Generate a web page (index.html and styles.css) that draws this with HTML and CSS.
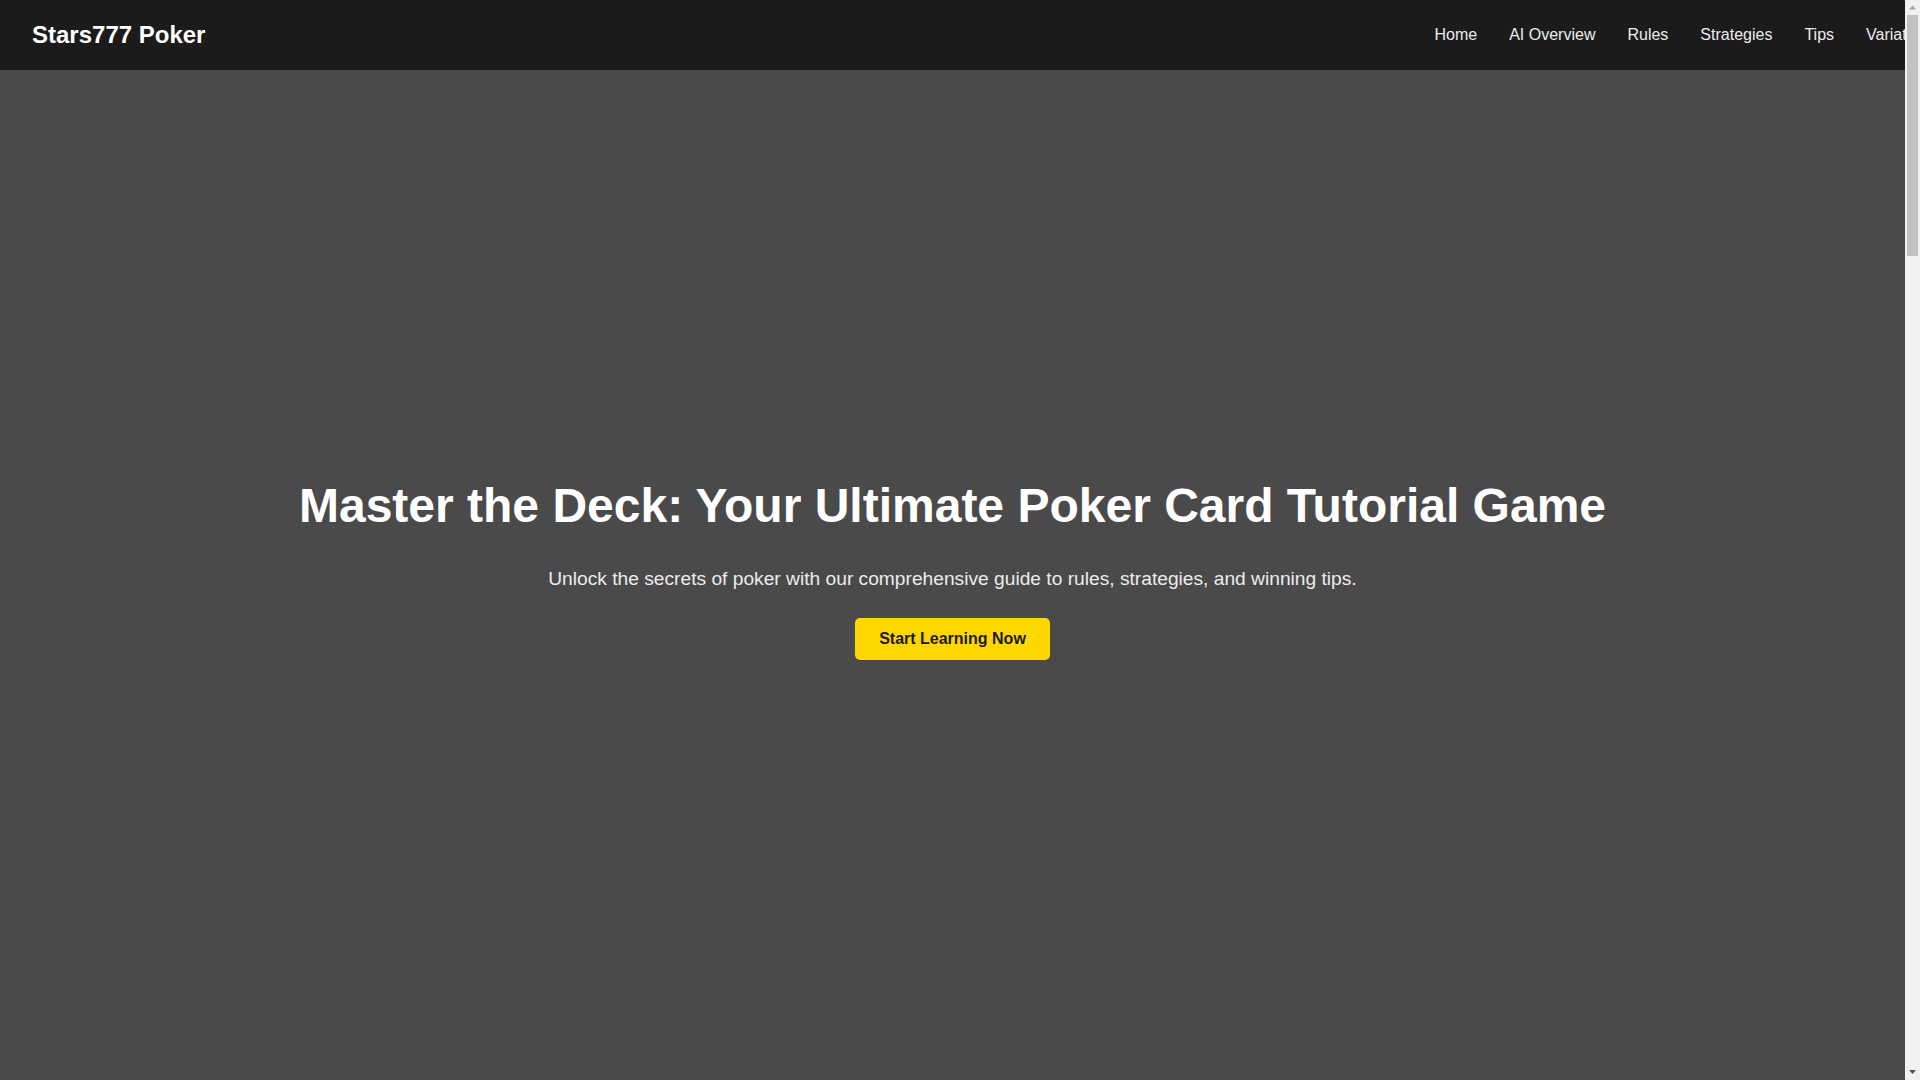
FILE: index.html
```html
<!DOCTYPE html>
<html lang="en">
<head>
<meta charset="utf-8">
<title>Stars777 Poker - Master the Deck</title>
<link rel="stylesheet" href="styles.css">
</head>
<body>
<header class="site-header">
  <a class="logo" href="#">Stars777 Poker</a>
  <nav class="main-nav">
    <ul class="nav-list">
      <li><a href="#home">Home</a></li>
      <li><a href="#overview">AI Overview</a></li>
      <li><a href="#rules">Rules</a></li>
      <li><a href="#strategies">Strategies</a></li>
      <li><a href="#tips">Tips</a></li>
      <li><a href="#variations">Variations</a></li>
    </ul>
  </nav>
</header>

<main>
  <section class="hero" id="home">
    <div class="hero-content">
      <h1 class="hero-title">Master the Deck: Your Ultimate Poker Card Tutorial Game</h1>
      <p class="hero-sub">Unlock the secrets of poker with our comprehensive guide to rules, strategies, and winning tips.</p>
      <a class="btn-primary" href="#rules">Start Learning Now</a>
    </div>
  </section>

  <section class="section" id="overview">
    <h2 class="section-title">AI Overview</h2>
    <p class="section-text">Poker is a family of card games that combines skill, strategy and a little luck. Players wager on the strength of their hands, and the best hand or the last player standing wins the pot.</p>
  </section>

  <section class="section alt" id="rules">
    <h2 class="section-title">Rules</h2>
    <p class="section-text">Learn how hands are ranked, how betting rounds work, and how the blinds and the dealer button move around the table.</p>
  </section>

  <section class="section" id="strategies">
    <h2 class="section-title">Strategies</h2>
    <p class="section-text">Position, starting hand selection, pot odds and reading opponents are the pillars of a winning game.</p>
  </section>

  <section class="section alt" id="tips">
    <h2 class="section-title">Tips</h2>
    <p class="section-text">Manage your bankroll, stay patient, and review your hands after each session.</p>
  </section>

  <section class="section" id="variations">
    <h2 class="section-title">Variations</h2>
    <p class="section-text">Texas Hold'em, Omaha, Seven-Card Stud and more: discover the games played around the world.</p>
  </section>
</main>

<footer class="site-footer">
  <p>&copy; 2024 Stars777 Poker. All rights reserved.</p>
</footer>
</body>
</html>
```

FILE: styles.css
```css
html {
  height: 100%;
  overflow: hidden;
  /* scrollbar gutter: up arrow, down arrow, thumb, track */
  background:
    url("data:image/svg+xml;utf8,<svg xmlns='http://www.w3.org/2000/svg' width='15' height='15'><polygon points='4,9.5 7.5,5.5 11,9.5' fill='%23a3a3a3'/></svg>") right top / 15px 15px no-repeat,
    url("data:image/svg+xml;utf8,<svg xmlns='http://www.w3.org/2000/svg' width='15' height='15'><polygon points='4,5 11,5 7.5,9' fill='%23505050'/></svg>") right bottom / 15px 15px no-repeat,
    linear-gradient(#c1c1c1, #c1c1c1) right 2px top 15px / 11px 241px no-repeat,
    #f1f1f1;
}

body {
  width: calc(100% - 15px);
  height: 100%;
  margin: 0;
  font-family: "Liberation Sans", Arial, sans-serif;
  background: #4a4a4a;
  color: #ffffff;
  overflow-x: hidden;
  overflow-y: auto;
  scrollbar-width: none;
}

a {
  text-decoration: none;
}

.site-header {
  display: flex;
  align-items: center;
  height: 70px;
  padding: 0 32px;
  background: #1b1b1b;
}

.logo {
  color: #ffffff;
  font-size: 24px;
  font-weight: bold;
  white-space: nowrap;
}

.main-nav {
  margin-left: auto;
  margin-right: -63px;
}

.nav-list {
  display: flex;
  gap: 32px;
  list-style: none;
  margin: 0;
  padding: 0;
}

.nav-list a {
  color: #ececec;
  font-size: 16px;
  white-space: nowrap;
}

.hero {
  display: flex;
  align-items: center;
  justify-content: center;
  min-height: calc(100vh - 70px);
  padding: 0 20px 12px;
  box-sizing: border-box;
  background: #4a4a4a;
  text-align: center;
}

.hero-content {
  display: flex;
  flex-direction: column;
  align-items: center;
}

.hero-title {
  margin: 0 0 35px;
  font-size: 48px;
  font-weight: bold;
  color: #ffffff;
}

.hero-sub {
  margin: 0 0 28px;
  font-size: 19.2px;
  color: #ececec;
}

.btn-primary {
  display: inline-block;
  padding: 12px 24px;
  background: #ffd700;
  color: #1b1b1b;
  font-size: 16px;
  font-weight: bold;
  border-radius: 5px;
}

.section {
  min-height: 700px;
  padding: 80px 32px;
  box-sizing: border-box;
  background: #4a4a4a;
  text-align: center;
}

.section.alt {
  background: #404040;
}

.section-title {
  margin: 0 0 24px;
  font-size: 36px;
}

.section-text {
  max-width: 800px;
  margin: 0 auto;
  font-size: 18px;
  line-height: 1.6;
  color: #e0e0e0;
}

.site-footer {
  padding: 24px 32px;
  background: #1b1b1b;
  text-align: center;
  color: #bbbbbb;
  font-size: 14px;
}

.site-footer p {
  margin: 0;
}
```
